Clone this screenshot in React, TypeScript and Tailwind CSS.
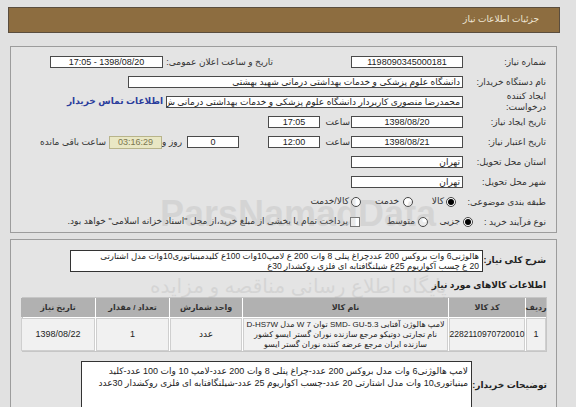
import React from 'react';

const font = { fontFamily: '"Liberation Sans", "DejaVu Sans", sans-serif' };

function Field({ w, children, align = 'center', className = '' }: { w: string; children?: React.ReactNode; align?: 'center' | 'right'; className?: string }) {
  return (
    <div
      className={`${w} h-[12px] shrink-0 overflow-hidden whitespace-nowrap border border-[#4a4a4a] bg-white px-[2px] text-[9px] leading-[10px] text-[#222] ${align === 'center' ? 'text-center' : 'text-right'} ${className}`}
    >
      {children}
    </div>
  );
}

function Label({ w, children, className = '' }: { w: string; children: React.ReactNode; className?: string }) {
  return <div className={`${w} shrink-0 whitespace-nowrap text-[9px] leading-[11px] text-[#333] ${className}`}>{children}</div>;
}

function Radio({ checked }: { checked?: boolean }) {
  return (
    <span className="flex h-[10px] w-[10px] shrink-0 items-center justify-center rounded-full border border-[#444] bg-white">
      {checked && <span className="h-[6px] w-[6px] rounded-full bg-black" />}
    </span>
  );
}

export default function App() {
  const columns = ['ردیف', 'کد کالا', 'نام کالا', 'واحد شمارش', 'تعداد / مقدار', 'تاریخ نیاز'];

  return (
    <div dir="rtl" style={font} className="relative h-[407px] w-[576px] overflow-hidden bg-[#e1e1e1]">
      {/* Header bar */}
      <div className="ml-[8px] mr-[16px] mt-[7px] flex h-[26px] items-center border border-[#5a4d3e] bg-[#8d6d40] pr-[20px]">
        <span className="text-[9px] text-[#eee6d6]">جزئیات اطلاعات نیاز</span>
      </div>

      {/* Main info box */}
      <div className="ml-[10px] mr-[19px] mt-[13px] h-[187px] border border-[#9c9c9c] bg-[#e4e4e4] pr-[10px] pt-[5px]">
        {/* Row 1 */}
        <div className="flex h-[20px] items-center">
          <Label w="w-[83px]">شماره نیاز:</Label>
          <Field w="w-[112px]">1198090345000181</Field>
          <Label w="w-[106px]" className="mr-[78px]">تاریخ و ساعت اعلان عمومی:</Label>
          <Field w="w-[113px]" className="mr-[4px]">1398/08/20 - 17:05</Field>
        </div>

        {/* Row 2 */}
        <div className="flex h-[20px] items-center">
          <Label w="w-[83px]">نام دستگاه خریدار:</Label>
          <Field w="w-[335px]" align="right">دانشگاه علوم پزشکی و خدمات بهداشتی درمانی شهید بهشتی</Field>
        </div>

        {/* Row 3 */}
        <div className="flex h-[20px] items-center">
          <Label w="w-[83px]" className="leading-[10px]">
            ایجاد کننده
            <br />
            درخواست:
          </Label>
          <Field w="w-[297px]" align="right">محمدرضا منصوری کاربردار دانشگاه علوم پزشکی و خدمات بهداشتی درمانی ش</Field>
          <span className="mr-[3px] shrink-0 whitespace-nowrap text-[9px] font-bold text-[#2a3c9c]">اطلاعات تماس خریدار</span>
        </div>

        {/* Row 4 */}
        <div className="flex h-[20px] items-center">
          <Label w="w-[83px]">تاریخ ایجاد نیاز:</Label>
          <Field w="w-[112px]">1398/08/20</Field>
          <Label w="w-[27px]" className="mr-[1px]">ساعت</Label>
          <Field w="w-[52px]" className="mr-[3px]">17:05</Field>
        </div>

        {/* Row 5 */}
        <div className="flex h-[20px] items-center">
          <Label w="w-[83px]">تاریخ اعتبار نیاز:</Label>
          <Field w="w-[112px]">1398/08/21</Field>
          <Label w="w-[27px]" className="mr-[1px]">ساعت</Label>
          <Field w="w-[52px]" className="mr-[3px]">12:00</Field>
          <Field w="w-[52px]" className="mr-[29px]">0</Field>
          <Label w="w-[15px]" className="mr-[5px]">روز و</Label>
          <div className="mr-[5px] h-[13px] w-[53px] shrink-0 border border-[#b8b48a] bg-[#e9e7c4] text-center text-[9px] leading-[11px] text-[#7a7650]">
            03:16:29
          </div>
          <Label w="w-[70px]" className="mr-[3px]">ساعت باقی مانده</Label>
        </div>

        {/* Row 6 */}
        <div className="flex h-[20px] items-center">
          <Label w="w-[83px]">استان محل تحویل:</Label>
          <Field w="w-[112px]" align="right">تهران</Field>
        </div>

        {/* Row 7 */}
        <div className="flex h-[20px] items-center">
          <Label w="w-[83px]">شهر محل تحویل:</Label>
          <Field w="w-[112px]" align="right">تهران</Field>
        </div>

        {/* Row 8 */}
        <div className="flex h-[20px] items-center text-[9px] text-[#333]">
          <Label w="w-[83px]">طبقه بندی موضوعی:</Label>
          <span className="mr-[7px] shrink-0"><Radio checked /></span>
          <span className="mr-[2px] w-[31px] shrink-0 whitespace-nowrap">کالا</span>
          <Radio />
          <span className="mr-[4px] w-[38px] shrink-0 whitespace-nowrap">خدمت</span>
          <Radio />
          <span className="mr-[2px] shrink-0 whitespace-nowrap">کالا/خدمت</span>
        </div>

        {/* Row 9 */}
        <div className="flex h-[20px] items-center text-[9px] text-[#333]">
          <Label w="w-[73px]">نوع فرآیند خرید :</Label>
          <Radio checked />
          <span className="mr-[3px] w-[32px] shrink-0 whitespace-nowrap">جزیی</span>
          <Radio />
          <span className="mr-[3px] w-[55px] shrink-0 whitespace-nowrap">متوسط</span>
          <span className="h-[10px] w-[10px] shrink-0 border border-[#777] bg-white" />
          <span className="mr-[2px] shrink-0 whitespace-nowrap">پرداخت تمام یا بخشی از مبلغ خرید،از محل "اسناد خزانه اسلامی" خواهد بود.</span>
        </div>
      </div>

      {/* Items box */}
      <div className="ml-[10px] mr-[19px] mt-[6px] h-[180px] border border-[#9c9c9c] bg-[#e4e4e4] pr-[10px] pt-[10px]">
        <div className="flex items-center">
          <div className="w-[58px] shrink-0 whitespace-nowrap text-[9px] font-bold text-[#222]">شرح کلی نیاز:</div>
          <div className="mr-[5px] h-[22px] w-[413px] shrink-0 overflow-hidden border border-[#333] bg-white px-[3px] text-[8.5px] leading-[10px] text-[#222]">
            <div className="whitespace-nowrap">هالوژنی6 وات بروکس 200 عددچراغ پنلی 8 وات 200 ع لامپ10وات 100ع کلیدمینیاتوری10وات مدل اشتارتی</div>
            <div className="whitespace-nowrap">20 ع چسب آکواریوم 25ع شیلنگافتابه ای فلزی روکشدار 30ع</div>
          </div>
        </div>

        <div className="mt-[7px] h-[12px] whitespace-nowrap text-[9px] font-bold leading-[12px] text-[#222]">اطلاعات کالاهای مورد نیاز</div>

        {/* Items table */}
        <div className="-mr-[1px] ml-[11px] mt-[6px] grid grid-cols-[20px_76px_205px_72px_73px_74px] gap-[1px] border border-[#c6c6c6] bg-white">
          {columns.map((c) => (
            <div key={c} className="flex h-[19px] items-center justify-center bg-[#b1b1b1] text-[8px] font-bold text-[#333]">
              {c}
            </div>
          ))}
          <div className="flex h-[33px] items-center justify-center border border-[#cfcfcf] bg-[#f1f1f1] text-[9px] text-[#222]">1</div>
          <div className="flex h-[33px] items-center justify-center border border-[#cfcfcf] bg-[#f1f1f1] text-[8.5px] text-[#222]">2282110970720010</div>
          <div className="flex h-[33px] flex-col items-center justify-center overflow-hidden border border-[#cfcfcf] bg-[#f1f1f1] text-[8px] leading-[10px] text-[#222]">
            <span className="whitespace-nowrap">لامپ هالوژن آفتابی SMD- GU-5.3 توان 7 W مدل D-HS7W</span>
            <span className="whitespace-nowrap">نام تجارتی دوتیکو مرجع سازنده نوران گستر ایسو کشور</span>
            <span className="whitespace-nowrap">سازنده ایران مرجع عرضه کننده نوران گستر ایسو</span>
          </div>
          <div className="flex h-[33px] items-center justify-center border border-[#cfcfcf] bg-[#f1f1f1] text-[9px] text-[#222]">عدد</div>
          <div className="flex h-[33px] items-center justify-center border border-[#cfcfcf] bg-[#f1f1f1] text-[9px] text-[#222]">1</div>
          <div className="flex h-[33px] items-center justify-center border border-[#cfcfcf] bg-[#f1f1f1] text-[9px] text-[#222]">1398/08/22</div>
        </div>

        {/* Buyer notes */}
        <div className="-mr-[1px] mt-[9px] flex items-center">
          <div className="w-[75px] shrink-0 whitespace-nowrap text-[9px] font-bold text-[#222]">توضیحات خریدار:</div>
          <div className="h-[49px] w-[391px] shrink-0 overflow-hidden border border-[#333] bg-white px-[3px] pt-[3px] text-[9px] leading-[12px] text-[#222]">
            <div className="whitespace-nowrap">لامپ هالوژنی6 وات مدل بروکس 200 عدد-چراغ پنلی 8 وات 200 عدد-لامپ 10 وات 100 عدد-کلید</div>
            <div className="whitespace-nowrap">مینیاتوری10 وات مدل اشتارتی 20 عدد-چسب اکواریوم 25 عدد-شیلنگافتابه ای فلزی روکشدار 30عدد</div>
          </div>
        </div>
      </div>

      {/* Faint watermark */}
      <div className="pointer-events-none absolute left-[160px] top-[196px] whitespace-nowrap text-[36px] font-bold leading-none text-[#9a9a9a] opacity-20" dir="ltr">
        ParsNamadData
      </div>
      <div className="pointer-events-none absolute left-[150px] top-[276px] whitespace-nowrap text-[20px] leading-none text-[#9a9a9a] opacity-20">
        پایگاه اطلاع رسانی مناقصه و مزایده
      </div>
    </div>
  );
}
